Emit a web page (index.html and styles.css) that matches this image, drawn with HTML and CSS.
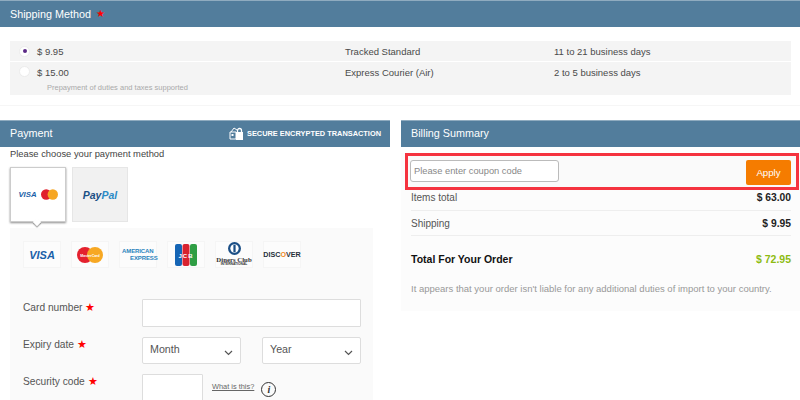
FILE: index.html
```html
<!DOCTYPE html>
<html lang="en">
<head>
<meta charset="utf-8">
<title>Checkout</title>
<link rel="stylesheet" href="styles.css">
</head>
<body>
<div class="page">
  <section class="shipping">
    <h2 class="bar">Shipping Method <span class="star bar-star">★</span></h2>
    <div class="ship-list">
      <div class="ship-row">
        <span class="radio checked"></span>
        <span class="price">$ 9.95</span>
        <span class="carrier">Tracked Standard</span>
        <span class="days">11 to 21 business days</span>
      </div>
      <div class="ship-row tall">
        <span class="radio"></span>
        <span class="price">$ 15.00</span>
        <span class="carrier">Express Courier (Air)</span>
        <span class="days">2 to 5 business days</span>
        <span class="prepay">Prepayment of duties and taxes supported</span>
      </div>
    </div>
  </section>
  <div class="columns">
    <section class="payment">
      <div class="bar pay-bar">
        <h2 class="bar-title">Payment</h2>
        <div class="secure">
          <svg class="lock" width="14" height="13" viewBox="0 0 14 13"><path d="M1 5h6V12H1z" fill="none" stroke="#fff"/><path d="M2 5 5 1l3 2" fill="none" stroke="#fff"/><path d="M2.500 7h2v2h-2z" fill="#fff"/><rect x="7" y="5" width="7" height="8" fill="#fff"/><path d="M8.500 6V3.500a2 2 0 0 1 4 0V6" fill="none" stroke="#fff" stroke-width="1.300"/></svg>
          <span>SECURE ENCRYPTED TRANSACTION</span>
        </div>
      </div>
      <p class="choose">Please choose your payment method</p>
      <div class="tabs">
        <div class="tab active">
          <span class="visa small">VISA</span>
          <svg width="17" height="11" viewBox="0 0 18 11"><circle cx="5.500" cy="5.500" r="5.500" fill="#e0202c"/><circle cx="12.500" cy="5.500" r="5.500" fill="#f6a623"/></svg>
        </div>
        <div class="tab"><span class="paypal">Pay<span class="pal">Pal</span></span></div>
      </div>
      <div class="card-panel">
        <div class="logos">
          <div class="logo"><span class="visa">VISA</span></div>
          <div class="logo"><svg width="26" height="16" viewBox="0 0 26 16"><circle cx="8" cy="8" r="8" fill="#e4212e"/><circle cx="18" cy="8" r="8" fill="#f7a823"/><text x="13" y="10" class="mc-text">MasterCard</text></svg></div>
          <div class="logo amex"><span>AMERICAN</span><span class="amex-two">EXPRESS</span></div>
          <div class="logo"><svg width="22" height="22" viewBox="0 0 22 22"><rect width="7" height="22" rx="2" fill="#1565b5"/><rect x="7.500" width="7" height="22" rx="2" fill="#d8222f"/><rect x="15" width="7" height="22" rx="2" fill="#2f9e44"/><text x="11" y="14" class="jcb-text">JCB</text></svg></div>
          <div class="logo diners">
            <svg width="13" height="13" viewBox="0 0 14 14"><circle cx="7" cy="7" r="7" fill="#1c4f86"/><circle cx="7" cy="7" r="4.500" fill="#fff"/><rect x="5.800" y="3" width="2.400" height="8" fill="#1c4f86"/></svg>
            <span class="diners-name">Diners Club</span>
            <span class="diners-int">INTERNATIONAL</span>
          </div>
          <div class="logo discover">DISC<span class="disc-o">O</span>VER</div>
        </div>
        <div class="form">
          <div class="form-row first">
            <label class="label">Card number <span class="star">★</span></label>
            <div class="input wide"></div>
          </div>
          <div class="form-row second">
            <label class="label">Expiry date <span class="star">★</span></label>
            <div class="selects">
              <div class="select"><span>Month</span><svg width="9" height="6" viewBox="0 0 9 6"><path d="M1 1l3.500 3.500L8 1" fill="none" stroke="#555" stroke-width="1.200"/></svg></div>
              <div class="select"><span>Year</span><svg width="9" height="6" viewBox="0 0 9 6"><path d="M1 1l3.500 3.500L8 1" fill="none" stroke="#555" stroke-width="1.200"/></svg></div>
            </div>
          </div>
          <div class="form-row third">
            <label class="label">Security code <span class="star">★</span></label>
            <div class="cvv-wrap">
              <div class="input cvv"></div>
              <a class="what">What is this?</a>
              <span class="info">i</span>
            </div>
          </div>
        </div>
      </div>
    </section>
    <section class="billing">
      <h2 class="bar lower">Billing Summary</h2>
      <div class="billing-body">
        <div class="coupon">
          <div class="coupon-input">Please enter coupon code</div>
          <div class="apply">Apply</div>
        </div>
        <div class="sum-row"><span>Items total</span><b>$ 63.00</b></div>
        <div class="sum-row"><span>Shipping</span><b>$ 9.95</b></div>
        <div class="total"><b>Total For Your Order</b><b class="green">$ 72.95</b></div>
        <p class="note">It appears that your order isn't liable for any additional duties of import to your country.</p>
      </div>
    </section>
  </div>
</div>
</body>
</html>
```

FILE: styles.css
```css
* { box-sizing: border-box; }
html, body { margin: 0; height: 400px; overflow: hidden; background: #fff; }
body { font-family: "Liberation Sans", Arial, sans-serif; font-size: 11px; color: #444; }
.page { width: 800px; height: 400px; overflow: hidden; }
h2 { margin: 0; font-weight: 400; }
.bar { display: flex; align-items: center; height: 27px; padding: 0 10px; background: #527d9c; border-top: 1px solid #8fabbf; color: #fff; font-size: 10.800px; line-height: 25px; white-space: pre; }
.lower { padding-bottom: 2px; }
.star { color: #f00; font-size: 10.500px; line-height: 0; }
.bar-star { font-size: 10px; margin-left: 2px; }

.shipping { height: 106px; border-bottom: 1px solid #f6f6f6; }
.ship-list { margin: 14px 9px 0 10px; display: flex; flex-direction: column; gap: 1px; }
.ship-row { display: grid; grid-template-columns: 27px 308px 209px 1fr; align-items: center; height: 20px; background: #f4f4f4; font-size: 9.500px; color: #4a4a4a; }
.ship-row.tall { height: 33px; align-items: start; padding-top: 5px; }
.radio { width: 11px; height: 11px; margin-left: 9px; border-radius: 50%; background: #fff; border: 1px solid #ececec; display: flex; align-items: center; justify-content: center; }
.ship-row.tall .radio { margin-top: -1px; }
.radio.checked::after { content: ""; width: 4px; height: 4px; border-radius: 50%; background: #5b2a86; }
.prepay { grid-column: 2 / 5; padding-left: 10px; font-size: 7.500px; color: #aaa; margin-top: 2px; }
.price { font-size: 9.500px; }

.columns { display: flex; justify-content: space-between; margin-top: 14px; }
.payment { width: 390px; }
.pay-bar { justify-content: space-between; padding-right: 9px; padding-bottom: 2px; }
.bar-title { font-size: 10.800px; }
.secure { display: flex; align-items: center; gap: 4px; font-size: 7.400px; font-weight: 700; }
.choose { margin: 0; padding: 1px 10px 0; height: 20px; line-height: 12px; font-size: 9.350px; color: #444; }
.tabs { display: flex; gap: 6px; padding-left: 10px; height: 61px; }
.tab { position: relative; width: 56px; height: 55px; background: #f1f1f1; border: 1px solid #e6e6e6; display: flex; align-items: center; justify-content: center; gap: 4px; }
.tab.active { background: #fff; border-color: #ccc; box-shadow: 0 1px 2px rgba(0,0,0,.45); }
.tab.active::after { content: ""; position: absolute; left: 23px; bottom: -4px; width: 6px; height: 6px; background: #fff; transform: rotate(45deg); box-shadow: 1px 1px 1px rgba(0,0,0,.35); }
.visa { font-size: 11px; font-weight: 700; font-style: italic; color: #1a5fa8; }
.visa.small { font-size: 7.800px; }
.paypal { font-size: 10.500px; font-weight: 700; font-style: italic; color: #1b4f84; }
.pal { color: #2a8ac6; }

.card-panel { width: 363px; margin-left: 10px; height: 200px; background: #fafafa; padding: 13px 13px 0; }
.logos { display: flex; gap: 10px; }
.logo { width: 38px; height: 27px; background: #fcfcfc; border: 1px solid #f5f5f5; display: flex; align-items: center; justify-content: center; flex-direction: column; }
.mc-text { font: 700 3.500px "Liberation Sans", sans-serif; fill: #fff; text-anchor: middle; }
.jcb-text { font: 700 6px "Liberation Sans", sans-serif; fill: #fff; text-anchor: middle; letter-spacing: 1px; }
.amex { font-size: 6px; line-height: 6.500px; color: #2a84bd; font-weight: 700; align-items: flex-start; padding-left: 2px; letter-spacing: -.1px; }
.amex-two { margin-left: 8px; }
.diners { line-height: 1; }
.diners-name { font: 700 6.800px "Liberation Serif", serif; color: #333; margin-top: 1px; white-space: nowrap; }
.diners-int { font-size: 3.300px; font-weight: 700; color: #333; white-space: nowrap; }
.discover { flex-direction: row; font-size: 7.200px; font-weight: 700; color: #26303a; }
.disc-o { color: #f08a24; }

.form { padding-top: 31px; }
.form-row { display: grid; grid-template-columns: 119px 219px; }
.form-row.first { height: 38px; }
.form-row.second { height: 37px; }
.label { font-size: 10.200px; color: #555; padding-top: 2px; line-height: 12px; }
.first .label { padding-top: 3px; }
.input { background: #fff; border: 1px solid #ddd; border-radius: 1px; }
.wide { height: 28px; }
.selects { display: flex; justify-content: space-between; }
.select { width: 99px; height: 27px; background: #fff; border: 1px solid #ddd; border-radius: 2px; display: flex; justify-content: space-between; align-items: center; padding: 0 7px; font-size: 10.700px; color: #555; }
.select span { margin-top: -3px; }
.select svg { margin-top: 4px; }
.cvv-wrap { display: flex; align-items: flex-start; }
.cvv { width: 61px; height: 40px; }
.what { margin: 8px 0 0 9px; font-size: 7.400px; color: #666; text-decoration: underline; }
.info { margin: 8px 0 0 7px; width: 15px; height: 15px; border: 1px solid #333; border-radius: 50%; display: flex; align-items: center; justify-content: center; font: italic 700 10px "Liberation Serif", serif; color: #333; }

.billing { width: 399px; }
.billing-body { background: #fcfcfc; height: 158px; padding: 0 9px 0 10px; }
.coupon { margin: 6px -8px 0 -6px; height: 37px; border: 3px solid #f5333f; background: #fafafa; display: flex; justify-content: space-between; padding: 4px 5px 0 2px; align-items: flex-start; }
.coupon-input { width: 149px; height: 22px; background: #fff; border: 1px solid #bbb; border-radius: 3px; padding-left: 3px; line-height: 20px; font-size: 9.300px; color: #888; }
.apply { width: 45px; height: 25px; background: #f57c00; border-radius: 2px; color: #fff; font-size: 9.700px; display: flex; align-items: center; justify-content: center; }
.sum-row { display: flex; justify-content: space-between; height: 21px; padding-top: 1px; line-height: 14px; border-bottom: 1px solid #eee; font-size: 10px; color: #555; }
.sum-row b { color: #222; font-size: 10.300px; }
.sum-row + .sum-row { height: 25px; padding-top: 6px; }
.total { display: flex; justify-content: space-between; margin-top: 16px; font-size: 10.500px; color: #111; line-height: 14px; }
.green { color: #8dbb12; }
.note { margin: 17px 0 0; font-size: 9.500px; color: #999; line-height: 12px; }
```
